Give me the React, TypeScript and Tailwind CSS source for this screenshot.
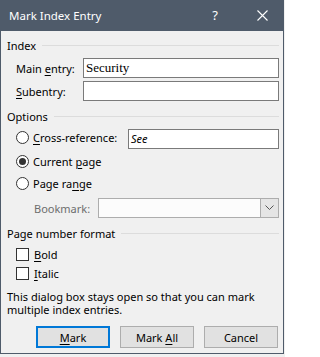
import React from "react";

const U = ({ children }: { children: React.ReactNode }) => (
  <span className="underline underline-offset-[2px] decoration-[1px]">{children}</span>
);

const Radio = ({ checked }: { checked?: boolean }) => (
  <span className="w-[13px] h-[13px] rounded-full border border-[#333333] bg-white flex items-center justify-center shrink-0">
    {checked && <span className="w-[7px] h-[7px] rounded-full bg-[#333333]" />}
  </span>
);

const Check = () => (
  <span className="w-[13px] h-[13px] border border-[#333333] bg-white shrink-0" />
);

const Heading = ({ children }: { children: React.ReactNode }) => (
  <div className="flex items-center h-[14px] pl-[6px] gap-[6px]">
    <span className="leading-none">{children}</span>
    <span className="flex-1 h-px bg-[#dcdcdc]" />
  </div>
);

export default function App() {
  return (
    <div
      className="w-[285px] h-[357px] bg-[#f0f0f0] text-[11px] text-black"
      style={{ fontFamily: '"Noto Sans", "Open Sans", sans-serif' }}
    >
      <div className="w-[284px] h-[354px] border-l border-r border-b border-[#4f5b6a] bg-[#f0f0f0] flex flex-col">
        {/* Title bar */}
        <div className="h-[31px] bg-[#4f5b6a] flex items-center text-white shrink-0 -mx-px pl-[9px]">
          <span className="text-[11.5px] leading-none">Mark Index Entry</span>
          <span className="ml-auto w-[10px] text-center text-[13px] leading-none mr-[37px]">?</span>
          <svg width="11" height="11" viewBox="0 0 11 11" className="mr-[16px]">
            <path d="M0.5 0.5 L10.5 10.5 M10.5 0.5 L0.5 10.5" stroke="white" strokeWidth="1.1" />
          </svg>
        </div>

        <div className="flex flex-col pr-[4px]">
          {/* Index */}
          <div className="mt-[7px]">
            <Heading>Index</Heading>
          </div>
          <div className="flex items-center mt-[6px] pl-[15px]">
            <span className="w-[67px] leading-none">
              Main <U>e</U>ntry:
            </span>
            <div
              className="flex-1 h-[20px] border border-[#7a7a7a] bg-white flex items-center px-[2px] text-[13px]"
              style={{ fontFamily: '"Liberation Serif", serif' }}
            >
              Security
            </div>
          </div>
          <div className="flex items-center mt-[3px] pl-[15px]">
            <span className="w-[67px] leading-none">
              <U>S</U>ubentry:
            </span>
            <div className="flex-1 h-[20px] border border-[#7a7a7a] bg-white" />
          </div>

          {/* Options */}
          <div className="mt-[8px]">
            <Heading>Options</Heading>
          </div>
          <div className="flex items-start mt-[6px] pl-[15px] h-[20px]">
            <div className="flex items-center h-[17px]">
              <Radio />
              <span className="ml-[4px] w-[95px] leading-none">
                <U>C</U>ross-reference:
              </span>
            </div>
            <div className="flex-1 h-[20px] border border-[#7a7a7a] bg-white flex items-center px-[2px] italic">
              See
            </div>
          </div>
          <div className="flex items-center mt-[4px] pl-[15px] h-[17px]">
            <Radio checked />
            <span className="ml-[4px] leading-none">
              Current <U>p</U>age
            </span>
          </div>
          <div className="flex items-center mt-[5px] pl-[15px] h-[17px]">
            <Radio />
            <span className="ml-[4px] leading-none">
              Page ra<U>n</U>ge
            </span>
          </div>
          <div className="flex items-center mt-[6px] pl-[33px]">
            <span className="w-[64px] leading-none text-[#6d6d6d]">Bookmark:</span>
            <div className="flex-1 h-[20px] border border-[#adadad] bg-[#fcfcfc] flex justify-end">
              <div className="w-[18px] h-full bg-[#e5e5e5] border-l border-[#adadad] flex items-center justify-center">
                <svg width="9" height="6" viewBox="0 0 9 6">
                  <path d="M0.5 0.5 L4.5 4.5 L8.5 0.5" fill="none" stroke="#555555" strokeWidth="1" />
                </svg>
              </div>
            </div>
          </div>

          {/* Page number format */}
          <div className="mt-[8px]">
            <Heading>Page number format</Heading>
          </div>
          <div className="flex items-center mt-[8px] pl-[15px] h-[13px]">
            <Check />
            <span className="ml-[5px] leading-none">
              <U>B</U>old
            </span>
          </div>
          <div className="flex items-center mt-[6px] pl-[15px] h-[13px]">
            <Check />
            <span className="ml-[5px] leading-none">
              <U>I</U>talic
            </span>
          </div>

          <p className="mt-[10px] pl-[6px] leading-[13px]">
            This dialog box stays open so that you can mark multiple index entries.
          </p>

          <div className="flex justify-end gap-[10px] mt-[10px] pr-px">
            <button className="w-[74px] h-[22px] border-2 border-[#0078d7] bg-[#e1e1e1] leading-none">
              <U>M</U>ark
            </button>
            <button className="w-[74px] h-[22px] border border-[#adadad] bg-[#e1e1e1] leading-none">
              Mark <U>A</U>ll
            </button>
            <button className="w-[74px] h-[22px] border border-[#adadad] bg-[#e1e1e1] leading-none">
              Cancel
            </button>
          </div>
        </div>
      </div>
    </div>
  );
}
